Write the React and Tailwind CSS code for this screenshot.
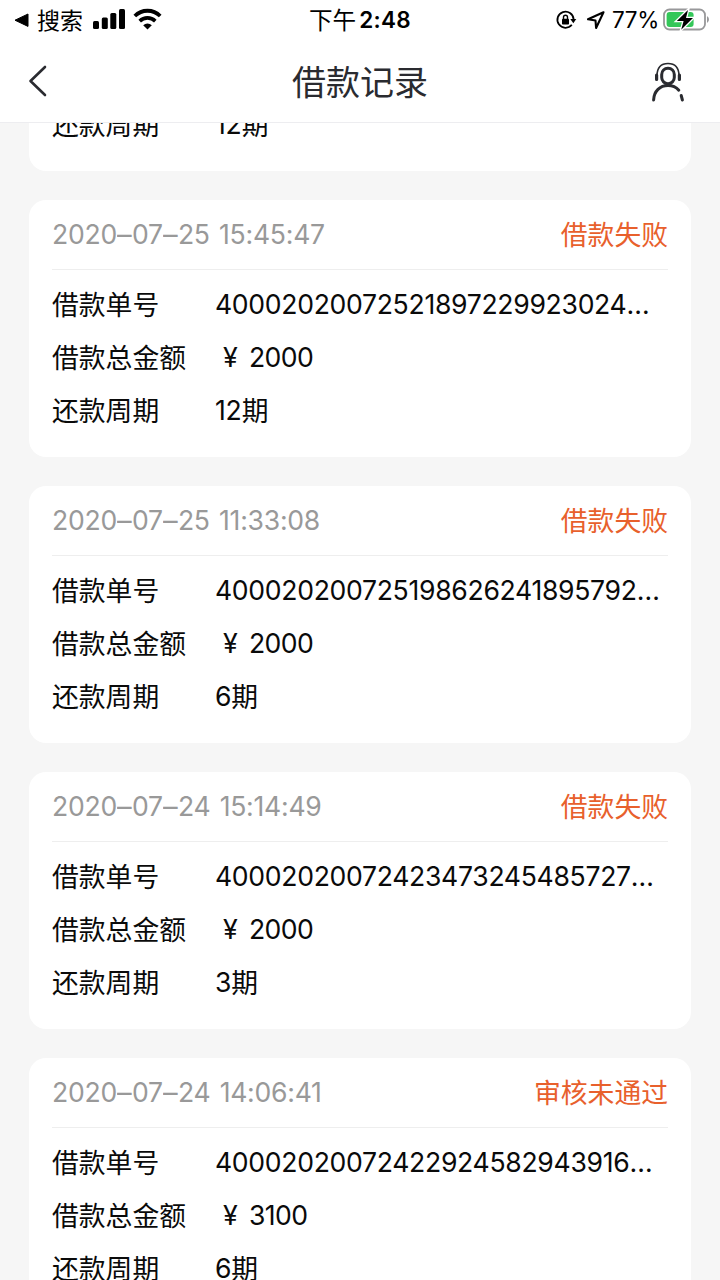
const records = [
  {
    date: ["2020", "07", "25"],
    clock: "15:45:47",
    status: "借款失败",
    number: "40002020072521897229923024",
    amount: "2000",
    period: "12",
  },
  {
    date: ["2020", "07", "25"],
    clock: "11:33:08",
    status: "借款失败",
    number: "400020200725198626241895792",
    amount: "2000",
    period: "6",
  },
  {
    date: ["2020", "07", "24"],
    clock: "15:14:49",
    status: "借款失败",
    number: "40002020072423473245485727",
    amount: "2000",
    period: "3",
  },
  {
    date: ["2020", "07", "24"],
    clock: "14:06:41",
    status: "审核未通过",
    number: "40002020072422924582943916",
    amount: "3100",
    period: "6",
  },
];

function StatusBar() {
  return (
    <div className="flex h-10 items-center text-black">
      <div className="flex flex-1 basis-0 items-center pl-[14px]">
        <svg className="h-[15px] w-[15px]" viewBox="0 0 15 15">
          <path d="M1 7.2 14 1v12.4Z" fill="currentColor" stroke="currentColor" strokeWidth="1" strokeLinejoin="round" />
        </svg>
        <span className="ml-2 pt-px text-[23px] leading-[38px]">搜索</span>
        <svg className="mb-[2px] ml-[10px] h-[22px] w-[33px]" viewBox="0 0 33 22" fill="currentColor">
          <rect x="0" y="13" width="6" height="8" rx="1.5" />
          <rect x="8.8" y="9.5" width="6" height="11.5" rx="1.5" />
          <rect x="17.3" y="5" width="6" height="16" rx="1.5" />
          <rect x="26" y="1" width="6" height="20" rx="1.5" />
        </svg>
        <svg className="mb-[2px] ml-[7px] h-[22px] w-[29px]" viewBox="0 0 29 22" fill="none" stroke="currentColor">
          <path d="M1.8 8a18 18 0 0 1 25.4 0" strokeWidth="3.8" />
          <path d="M6.7 13.1a11.1 11.1 0 0 1 15.6 0" strokeWidth="3.6" />
          <path d="M14.5 21.5 10.2 17.3a6.3 6.3 0 0 1 8.6 0Z" fill="currentColor" stroke="none" />
        </svg>
      </div>
      <div className="-ml-[4px] flex items-center text-[23.6px] leading-[38px]">
        <span className="pt-px">下午</span>
        <span className="ml-[3px] text-[22.5px] font-semibold tracking-[0.3px]">2:48</span>
      </div>
      <div className="flex flex-1 basis-0 items-center justify-end pr-[10px]">
        <svg className="h-[22px] w-[22px]" viewBox="0 0 22 22" fill="none" stroke="currentColor" strokeWidth="1.8">
          <path d="M16.8 15.8a8.1 8.1 0 1 1 1.8-5.6" />
          <path d="M15.3 10h6l-3 4.2Z" fill="currentColor" stroke="none" />
          <rect x="7" y="9.8" width="7" height="5.8" rx="0.8" fill="currentColor" stroke="none" />
          <path d="M8.5 10V8.3a2 2 0 0 1 4 0V10" strokeWidth="1.4" />
        </svg>
        <svg className="ml-[9px] h-5 w-5" viewBox="0 0 20 20" fill="none" stroke="currentColor" strokeWidth="2.1" strokeLinejoin="round">
          <path d="M17.5 2.3 2 9.3l7.5 1.2.6 7.5Z" />
        </svg>
        <span className="ml-[6px] text-[22.5px] leading-[38px] tracking-[-0.3px]">77%</span>
        <svg className="ml-[4px] h-[24px] w-[47px]" viewBox="0 0 47 24">
          <rect x="1" y="1.5" width="41" height="20" rx="5.5" fill="none" stroke="#98989a" strokeWidth="1.8" />
          <path d="M44 8.3c2.6 1 2.6 5.4 0 6.4Z" fill="#98989a" />
          <rect x="3.6" y="4.1" width="27" height="14.8" rx="3" fill="#34c759" />
          <path d="M25 2 13.8 13h6.8L18.2 21.7 30 10h-7Z" fill="black" stroke="white" strokeWidth="2.6" paintOrder="stroke" />
        </svg>
      </div>
    </div>
  );
}

function NavBar() {
  return (
    <div className="flex h-[83px] items-center border-b border-[#ededf0] text-[#2a2b30]">
      <div className="w-[120px] pl-[28px]">
        <svg className="h-8 w-5" viewBox="0 0 20 32" fill="none" stroke="currentColor" strokeWidth="2.6" strokeLinecap="round" strokeLinejoin="round">
          <path d="M17 2 2.5 16 17 30" />
        </svg>
      </div>
      <h1 className="mt-[3px] flex-1 text-center text-[34px] leading-[40px]">借款记录</h1>
      <div className="mt-px flex w-[120px] justify-end pr-[34px]">
        <svg className="h-10 w-[36px]" viewBox="0 0 36 40" fill="none" stroke="currentColor" strokeLinecap="round">
          <rect x="11.7" y="6.2" width="12.6" height="15.5" rx="6.2" strokeWidth="3" />
          <path d="M7 13.5C7.2 5.5 11.5 1.5 18 1.5S28.8 5.5 29 13.5" strokeWidth="1.6" />
          <path d="M6.6 13v4.5M29.4 13v4.5" strokeWidth="3.2" />
          <path d="M3.6 38C4 29 10 23.5 18 23.5c4.5 0 8.5 2 10.8 4.7M31.2 33.5l1.2 4.5" strokeWidth="3" />
        </svg>
      </div>
    </div>
  );
}

function Row({ label, children }) {
  return (
    <div className="flex h-[53px] items-center">
      <dt className="w-[163px] shrink-0 pt-[2px]">{label}</dt>
      <dd className="flex items-center whitespace-nowrap">{children}</dd>
    </div>
  );
}

function Period({ count }) {
  return (
    <Row label="还款周期">
      <span className="text-[26.6px] tracking-[-0.2px]">{count}</span>
      <span className="pt-[2px]">期</span>
    </Row>
  );
}

function RecordCard({ record }) {
  const [year, month, day] = record.date;
  return (
    <article className="h-[257px] shrink-0 rounded-[17px] bg-white px-[23px] text-[26.8px] leading-[40px] text-[#0a0a0a]">
      <header className="flex h-[70px] items-center justify-between border-b border-[#eeeeee] pb-px">
        <time className="text-[26.6px] tracking-[-0.25px] text-[#999999] [word-spacing:2px]">
          {year}
          <span className="inline-block origin-left scale-x-110 pr-[2px]">–</span>
          {month}
          <span className="inline-block origin-left scale-x-110 pr-[2px]">–</span>
          {day} {record.clock}
        </time>
        <span className="pt-[2px] text-[#e8602c]">{record.status}</span>
      </header>
      <dl className="pt-[7px]">
        <Row label="借款单号">
          <span className="text-[26.6px] tracking-[-0.31px]">{record.number}</span>
          <span className="tracking-[0.2px]">…</span>
        </Row>
        <Row label="借款总金额">
          <span className="w-[34px] pl-[8px]">¥</span>
          <span className="text-[26.6px] tracking-[-0.6px]">{record.amount}</span>
        </Row>
        <Period count={record.period} />
      </dl>
    </article>
  );
}

function ScrolledCard({ period }) {
  return (
    <article className="h-[48px] shrink-0 rounded-b-[17px] bg-white px-[23px] text-[26.8px] leading-[40px] text-[#0a0a0a]">
      <dl className="-mt-[26px]">
        <Period count={period} />
      </dl>
    </article>
  );
}

export default function App() {
  return (
    <div className="flex h-[1280px] w-[720px] flex-col overflow-hidden bg-[#f6f6f6] font-['Inter','Noto_Sans_CJK_SC',sans-serif]">
      <div className="shrink-0 bg-white">
        <StatusBar />
        <NavBar />
      </div>
      <main className="flex min-h-0 flex-1 flex-col gap-[29px] overflow-hidden px-[29px]">
        <ScrolledCard period="12" />
        {records.map((record) => (
          <RecordCard key={record.number} record={record} />
        ))}
      </main>
    </div>
  );
}
